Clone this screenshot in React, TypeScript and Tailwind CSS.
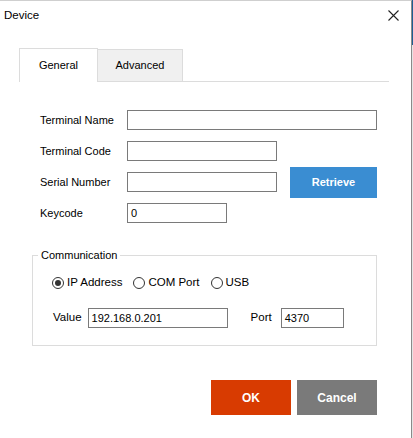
import React from "react";

const Field = ({ width, value }: { width: string; value?: string }) => (
  <div
    className={`${width} h-[20px] border border-[#7a7a7a] bg-white pl-[3px] flex items-center text-[11px] leading-none`}
  >
    {value}
  </div>
);

const Radio = ({ label, checked }: { label: string; checked?: boolean }) => (
  <div className="flex items-center gap-[3px]">
    <span className="w-[12px] h-[12px] rounded-full border border-[#333] flex items-center justify-center">
      {checked && <span className="w-[6px] h-[6px] rounded-full bg-[#333]" />}
    </span>
    <span className="text-[11.5px]">{label}</span>
  </div>
);

const Row = ({ label, children }: { label: string; children: React.ReactNode }) => (
  <div className="flex items-center h-[20px]">
    <span className="w-[87px] shrink-0">{label}</span>
    {children}
  </div>
);

export default function App() {
  return (
    <div className="w-[413px] h-[438px] flex bg-white text-black text-[11px] font-['Liberation_Sans',Arial,sans-serif]">
      <div className="w-[412px] h-full flex flex-col border-t border-[#cfcfcf] border-r border-r-[#8a8a8a]">
        {/* title bar */}
        <div className="h-[29px] flex items-center justify-between pl-[4px] pr-[12px]">
          <span className="text-[11.5px]">Device</span>
          <svg width="11" height="11" viewBox="0 0 11 11" className="text-[#222]">
            <path d="M0.5 0.5L10.5 10.5M10.5 0.5L0.5 10.5" stroke="currentColor" strokeWidth="1.1" />
          </svg>
        </div>

        {/* tabs */}
        <div className="mt-[18px] ml-[19px] mr-[22px] flex items-end h-[34px] border-b border-[#dcdcdc]">
          <div className="w-[79px] h-[34px] -mb-px bg-white border border-b-0 border-[#dcdcdc] flex items-center justify-center pb-[1px]">
            General
          </div>
          <div className="w-[85px] h-[32px] bg-[#f0f0f0] border border-l-0 border-b-0 border-[#dcdcdc] flex items-center justify-center">
            Advanced
          </div>
        </div>

        {/* form */}
        <div className="ml-[32px] w-[345px] mt-[28px] flex flex-col">
          <div className="pl-[8px] flex flex-col gap-[11px]">
            <Row label="Terminal Name">
              <Field width="w-[250px]" />
            </Row>
            <Row label="Terminal Code">
              <Field width="w-[150px]" />
            </Row>
            <Row label="Serial Number">
              <Field width="w-[150px]" />
              <button className="ml-[13px] w-[87px] h-[31px] shrink-0 bg-[#3a8dd2] text-white font-bold text-[11px] flex items-center justify-center">
                Retrieve
              </button>
            </Row>
            <Row label="Keycode">
              <Field width="w-[100px]" value="0" />
            </Row>
          </div>

          {/* communication group */}
          <div className="relative mt-[32px] h-[91px] border border-[#dcdcdc] flex flex-col">
            <span className="absolute -top-[7px] left-[5px] px-[3px] bg-white leading-[13px]">
              Communication
            </span>
            <div className="mt-[20px] pl-[19px] h-[14px] flex items-center gap-[11px]">
              <Radio label="IP Address" checked />
              <Radio label="COM Port" />
              <Radio label="USB" />
            </div>
            <div className="mt-[18px] pl-[20px] flex items-center h-[20px]">
              <span className="text-[11.5px]">Value</span>
              <div className="ml-[6px]">
                <Field width="w-[140px]" value="192.168.0.201" />
              </div>
              <span className="ml-[23px] text-[11.5px]">Port</span>
              <div className="ml-[9px]">
                <Field width="w-[63px]" value="4370" />
              </div>
            </div>
          </div>

          {/* actions */}
          <div className="mt-[34px] flex justify-end gap-[6px]">
            <button className="w-[80px] h-[35px] bg-[#d83b01] text-white font-bold text-[12px]">
              OK
            </button>
            <button className="w-[80px] h-[35px] bg-[#7a7a7a] text-white font-bold text-[12px]">
              Cancel
            </button>
          </div>
        </div>
      </div>
      <div className="w-[1px] h-full flex flex-col">
        <div className="h-[45px] bg-[#1e5f93]" />
        <div className="flex-1 bg-[#e4e4e4]" />
      </div>
    </div>
  );
}
